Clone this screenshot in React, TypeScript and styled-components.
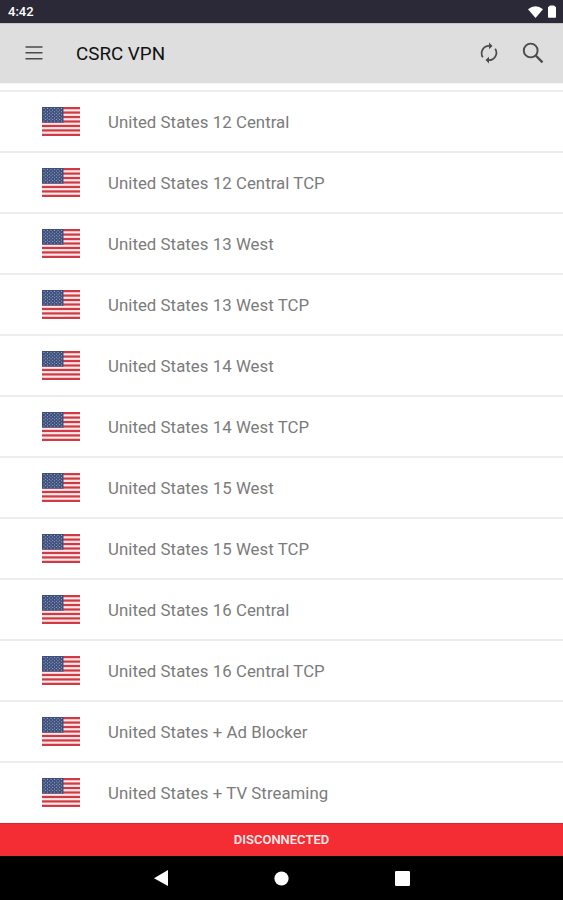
import React from "react";
import styled, { createGlobalStyle } from "styled-components";

const GlobalStyle = createGlobalStyle`
  * { box-sizing: border-box; }
  html, body { margin: 0; padding: 0; background: #fff; }
  body { font-family: Roboto, "Liberation Sans", sans-serif; }
`;

const Screen = styled.div`
  width: 563px;
  height: 900px;
  display: flex;
  flex-direction: column;
  overflow: hidden;
  background: #fff;
`;

const StatusBar = styled.div`
  flex: none;
  height: 23px;
  padding: 0 7px 0 8px;
  display: flex;
  align-items: center;
  justify-content: space-between;
  background: #2b2838;
  color: #fff;
  font-size: 13px;
  font-weight: 500;
`;

const StatusIcons = styled.div`
  display: flex;
  align-items: center;
  gap: 5px;
`;

const Toolbar = styled.header`
  flex: none;
  height: 60px;
  display: flex;
  align-items: center;
  padding: 0 18px 1px 25px;
  border-top: 1px solid #c4c4c6;
  background: #dedede;
`;

const Title = styled.h1`
  flex: 1;
  margin: 0 0 0 33px;
  padding-top: 1px;
  font-size: 18.8px;
  line-height: 24px;
  font-weight: 400;
  color: #111;
`;

const IconButton = styled.button<{ $gap?: number }>`
  display: flex;
  padding: 0;
  margin-left: ${(p) => p.$gap ?? 0}px;
  border: 0;
  background: none;
  color: #4b4b4b;
`;

const ServerList = styled.ul`
  flex: 1;
  min-height: 0;
  margin: 0;
  padding: 6.4px 0 0;
  list-style: none;
  border-top: 1px solid #f4f4f4;
`;

const ServerRow = styled.li`
  height: 60.95px;
  display: flex;
  align-items: center;
  padding-left: 42px;
  border-top: 2px solid #ececec;
`;

const ServerName = styled.span`
  margin-left: 28px;
  padding-top: 1px;
  font-size: 16.8px;
  line-height: 24px;
  letter-spacing: 0.05px;
  color: #7b7b7b;
  white-space: pre;
`;

const ConnectionBar = styled.div`
  flex: none;
  height: 33px;
  display: flex;
  align-items: center;
  justify-content: center;
  border-top: 1px solid #e5202a;
  padding-bottom: 1px;
  background: #f42c33;
  color: #ffe9e9;
  font-size: 13px;
  font-weight: 600;
`;

const NavigationBar = styled.nav`
  flex: none;
  height: 44px;
  display: grid;
  grid-template-columns: repeat(3, 120.5px);
  justify-content: center;
  justify-items: center;
  align-items: center;
  background: #000;
`;

const servers = [
  "United States 12 Central",
  "United States 12 Central TCP",
  "United States 13 West",
  "United States 13 West TCP",
  "United States 14 West",
  "United States 14 West TCP",
  "United States 15 West",
  "United States 15 West TCP",
  "United States 16 Central",
  "United States 16 Central TCP",
  "United States + Ad Blocker",
  "United States + TV Streaming",
];

const STRIPE = 29 / 13;

function Flag() {
  return (
    <svg width="38" height="29" viewBox="0 0 38 29" aria-label="United States">
      <rect width="38" height="29" fill="#fbe9ea" />
      {Array.from({ length: 7 }, (_, i) => (
        <rect key={i} y={i * 2 * STRIPE} width="38" height={STRIPE} fill="#d03a45" />
      ))}
      <rect width="21.5" height={STRIPE * 7} fill="#3d4f7c" />
      {Array.from({ length: 9 }, (_, r) =>
        Array.from({ length: r % 2 ? 5 : 6 }, (_, c) => (
          <circle
            key={`${r}-${c}`}
            cx={2 + c * 3.5 + (r % 2 ? 1.75 : 0)}
            cy={1.5 + r * 1.57}
            r="0.5"
            fill="#c3cbdc"
          />
        ))
      )}
    </svg>
  );
}

export default function App() {
  return (
    <>
      <GlobalStyle />
      <Screen>
        <StatusBar>
          <span>4:42</span>
          <StatusIcons>
            <svg width="15" height="12" viewBox="0 0 15 12" fill="#fff">
              <path d="M7.5 12 0 3.2Q7.5-2.6 15 3.2Z" />
            </svg>
            <svg width="8" height="13" viewBox="0 0 8 13" fill="#fff">
              <path d="M2 .5h4L8 2.300V12q0 .8-.8.8H.8Q0 12.800 0 12V2.300Z" />
            </svg>
          </StatusIcons>
        </StatusBar>
        <Toolbar>
          <IconButton aria-label="Menu">
            <svg width="18" height="14" viewBox="0 0 18 14" fill="currentColor">
              <path d="M.5.3h17v1.5H.5zM.5 6.100h17v1.500H.5zM.5 11.900h17v1.500H.5z" />
            </svg>
          </IconButton>
          <Title>CSRC VPN</Title>
          <IconButton aria-label="Refresh">
            <svg width="24" height="24" viewBox="0 0 24 24" fill="none" stroke="currentColor" strokeWidth="1.700">
              <path d="M5.800 16.300A7.500 7.500 0 0 1 12.500 4.800M18.200 7.700A7.500 7.500 0 0 1 11.500 19.200" />
              <path d="M12 1.600 15.500 4.900 12 8.200ZM12 15.800 8.500 19.100 12 22.400Z" fill="currentColor" stroke="none" />
            </svg>
          </IconButton>
          <IconButton aria-label="Search" $gap={20}>
            <svg width="24" height="24" viewBox="0 0 24 24" fill="none" stroke="currentColor">
              <circle cx="9.700" cy="9.500" r="6.900" strokeWidth="1.900" />
              <path d="M14.700 14.500 21.500 21.300" strokeWidth="2.400" />
            </svg>
          </IconButton>
        </Toolbar>
        <ServerList>
          {servers.map((name) => (
            <ServerRow key={name}>
              <Flag />
              <ServerName>{name}</ServerName>
            </ServerRow>
          ))}
        </ServerList>
        <ConnectionBar>DISCONNECTED</ConnectionBar>
        <NavigationBar>
          <svg width="15" height="16" viewBox="0 0 15 16" fill="#fff">
            <path d="M14 0v16L0 8.300Z" />
          </svg>
          <svg width="15" height="15" viewBox="0 0 15 15" fill="#fff">
            <circle cx="7.500" cy="7.500" r="7.100" />
          </svg>
          <svg width="15" height="15" viewBox="0 0 15 15" fill="#fff">
            <rect width="15" height="15" rx="1.300" />
          </svg>
        </NavigationBar>
      </Screen>
    </>
  );
}
